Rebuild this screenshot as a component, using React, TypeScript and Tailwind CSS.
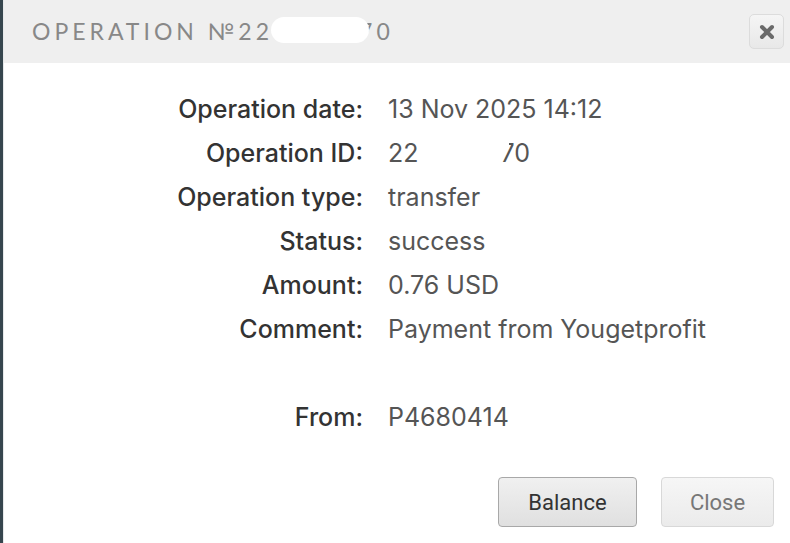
import React from "react";

const rows: [string, React.ReactNode][] = [
  ["Operation date:", "13 Nov 2025 14:12"],
  [
    "Operation ID:",
    <span key="id" className="inline-flex items-center">
      22
      <span className="inline-block w-[82px]" />
      <span className="relative">
        70
        <span className="absolute left-[-2px] top-[3px] w-[10px] h-[11px] bg-white" />
      </span>
    </span>,
  ],
  ["Operation type:", "transfer"],
  ["Status:", "success"],
  ["Amount:", "0.76 USD"],
  ["Comment:", "Payment from Yougetprofit"],
  ["", "\u00a0"],
  ["From:", "P4680414"],
];

export default function App() {
  return (
    <div className="flex w-[790px] h-[543px] bg-white overflow-hidden">
      <div className="w-[3px] bg-[#36464e] shrink-0" />
      <div className="w-[1px] bg-[#e6e9ea] shrink-0" />
      <div className="flex-1 flex flex-col">
        <div className="h-[63px] bg-[#efefef] flex items-center justify-between pl-[28px] pr-[6px]">
          <div className="text-[23px] tracking-[4px] text-[#888] font-['Lato',sans-serif] flex items-center">
            <span>OPERATION №22</span>
            <span className="relative inline-block w-[86px] h-[22px]">
              <span className="absolute left-[-2px] top-[-4px] w-[98px] h-[26px] bg-white rounded-full" />
            </span>
            <span>70</span>
          </div>
          <button className="w-[35px] h-[35px] rounded-[5px] border border-[#dcdcdc] bg-gradient-to-b from-[#f5f5f5] to-[#e8e8e8] flex items-center justify-center">
            <svg width="18" height="18" viewBox="0 0 18 18">
              <path d="M4 4 L14 14 M14 4 L4 14" stroke="#6a6a6a" strokeWidth="4" strokeLinecap="round" />
            </svg>
          </button>
        </div>
        <div className="pt-[25px] font-['Inter',sans-serif] text-[25px]">
          {rows.map(([l, v], i) => (
            <div key={i} className="flex h-[44px] items-center">
              <div className="w-[359px] text-right text-[#333] font-medium">{l}</div>
              <div className="pl-[25px] text-[#555]">{v}</div>
            </div>
          ))}
        </div>
        <div className="flex justify-end gap-[24px] pr-[16px] mt-[37px] font-['Roboto',sans-serif] text-[22px]">
          <button className="w-[139px] h-[50px] rounded-[4px] border border-[#a8a8a8] bg-gradient-to-b from-[#f0f0f0] to-[#e0e0e0] text-[#333]">Balance</button>
          <button className="w-[113px] h-[50px] rounded-[4px] border border-[#d8d8d8] bg-gradient-to-b from-[#f6f6f6] to-[#ebebeb] text-[#777]">Close</button>
        </div>
      </div>
    </div>
  );
}
